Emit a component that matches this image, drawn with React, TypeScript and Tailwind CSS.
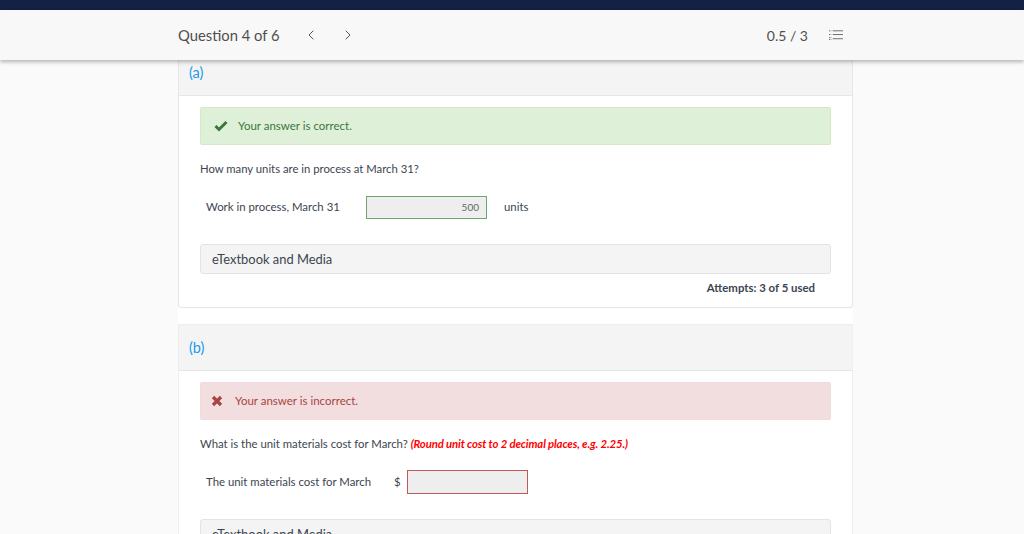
import { ChevronLeft, ChevronRight } from "lucide-react";
import type { ReactNode } from "react";

function PartHead({ label, className }: { label: string; className: string }) {
  return (
    <div className={`flex items-center border-b border-[#e6e6e6] bg-[#f4f4f4] px-[10px] text-[14.5px] text-[#1a9ae8] ${className}`}>
      {label}
    </div>
  );
}

function Notice({ tone, icon, children }: { tone: "ok" | "bad"; icon: ReactNode; children: ReactNode }) {
  const cls =
    tone === "ok"
      ? "border-[#d6e9c6] bg-[#dff0d8] text-[#3c763d]"
      : "border-[#f0dcdc] bg-[#f2dede] text-[#a94442]";
  return (
    <div className={`flex h-[38px] items-center rounded-[2px] border text-[11.5px] ${cls}`}>
      {icon}
      {children}
    </div>
  );
}

function TextbookBar() {
  return (
    <div className="flex h-[30px] items-center rounded-[3px] border border-[#e3e3e3] bg-[#f4f4f4] px-[11px] pt-[1px] text-[12.9px] text-[#3d4550]">
      eTextbook and Media
    </div>
  );
}

export default function App() {
  return (
    <div className="flex h-[534px] flex-col overflow-hidden bg-[#fafafa] font-['Lato',sans-serif] text-[#3d4550]">
      <div className="h-[10px] shrink-0 bg-[#132145]" />
      <header className="relative z-10 h-[50px] shrink-0 bg-[#f8f8f8] shadow-[0_2px_4px_rgba(0,0,0,0.28)]">
        <div className="ml-[178px] flex h-full w-[675px] items-center text-[#4f4f4f]">
          <span className="text-[14.8px]">Question 4 of 6</span>
          <ChevronLeft className="ml-[23px] h-[16px] w-[16px] text-[#555]" strokeWidth={1.5} />
          <ChevronRight className="ml-[21px] h-[16px] w-[16px] text-[#555]" strokeWidth={1.5} />
          <span className="ml-auto text-[14px]">0.5 / 3</span>
          <svg viewBox="0 0 15 12" className="ml-[21px] mr-[10px] h-[12px] w-[14px]" stroke="#666" fill="none">
            <path d="M4 1.5h11M4 5.5h11M4 10h11" strokeWidth="1" />
            <path d="M0 1.5h2.5M0 5.5h2.5M0 8.8h2.5M0 10.8h2.5" strokeWidth="1" strokeDasharray="1.2 0.6" />
          </svg>
        </div>
      </header>

      <main className="ml-[178px] w-[675px] bg-white">
        <section className="rounded-b-[3px] border-x border-b border-[#e6e6e6] bg-white">
          <PartHead label="(a)" className="h-[36px] pb-[9px]" />
          <div className="px-[21px] pt-[11px]">
            <Notice
              tone="ok"
              icon={
                <svg viewBox="0 0 14 11" className="ml-[13px] mr-[10px] h-[12px] w-[14px]">
                  <path d="M1.5 5.5 5 9l7.5-7.5" fill="none" stroke="#3c763d" strokeWidth="3" />
                </svg>
              }
            >
              Your answer is correct.
            </Notice>
            <p className="mt-[16px] text-[11.3px] leading-[16px]">How many units are in process at March 31?</p>
            <div className="mt-[18px] flex h-[24px] items-center text-[11.4px]">
              <span className="ml-[6px] w-[160px]">Work in process, March 31</span>
              <div className="flex h-[23px] w-[121px] items-center justify-end border border-[#6fa571] bg-[#eeeeee] pr-[7px] text-[10px] text-[#666]">
                500
              </div>
              <span className="ml-[17px]">units</span>
            </div>
            <div className="mt-[25px]">
              <TextbookBar />
            </div>
            <p className="mt-[6px] mb-[12px] pr-[16px] text-right text-[11.4px] font-bold leading-[15px]">
              Attempts: 3 of 5 used
            </p>
          </div>
        </section>

        <section className="mt-[16px] border-x border-t border-[#eeeeee] bg-white">
          <PartHead label="(b)" className="h-[46px]" />
          <div className="px-[21px] pt-[11px]">
            <Notice
              tone="bad"
              icon={
                <svg viewBox="0 0 12 12" className="ml-[10px] mr-[12px] h-[12px] w-[12px]">
                  <path d="M2 2l8 8M10 2l-8 8" fill="none" stroke="#a94442" strokeWidth="3.2" />
                </svg>
              }
            >
              Your answer is incorrect.
            </Notice>
            <p className="mt-[16px] text-[11.35px] leading-[16px]">
              What is the unit materials cost for March?{" "}
              <em className="font-bold tracking-[-0.13px] text-[#ff0000]">(Round unit cost to 2 decimal places, e.g. 2.25.)</em>
            </p>
            <div className="mt-[18px] flex h-[24px] items-center text-[11.4px]">
              <span className="ml-[6px] w-[188px]">The unit materials cost for March</span>
              <span className="w-[13px]">$</span>
              <div className="h-[24px] w-[121px] border border-[#c05a58] bg-[#eeeeee]" />
            </div>
            <div className="mt-[25px]">
              <TextbookBar />
            </div>
          </div>
        </section>
      </main>
    </div>
  );
}
